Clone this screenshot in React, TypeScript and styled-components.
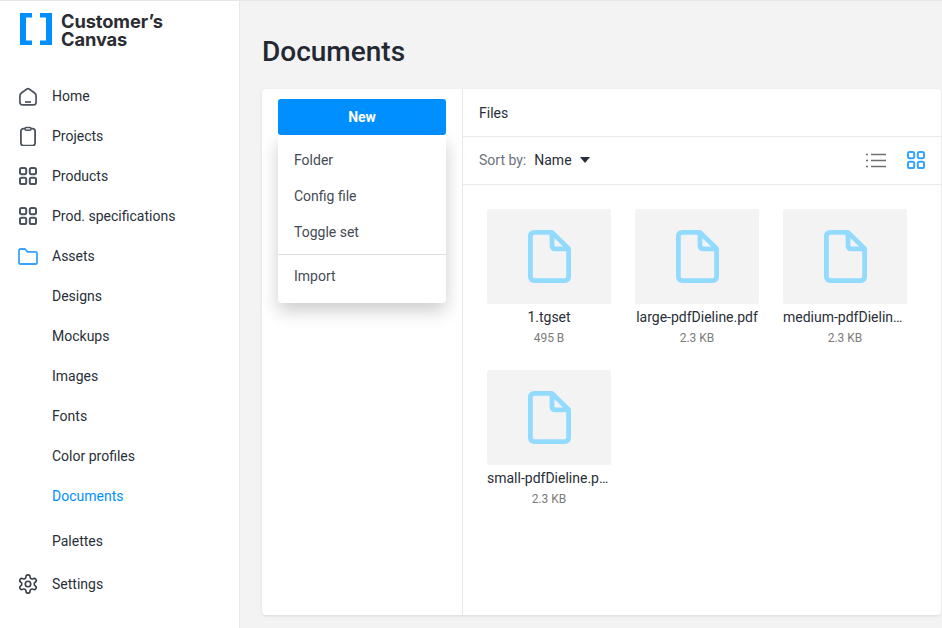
import React from 'react';
import styled, { createGlobalStyle } from 'styled-components';

const GlobalStyle = createGlobalStyle`
  html, body {
    margin: 0;
    padding: 0;
    height: 100%;
    overflow: hidden;
    font-family: Roboto, "Liberation Sans", sans-serif;
    color: #292f38;
  }
  * {
    box-sizing: border-box;
  }
`;

const HomeIcon = () => (
  <svg width="20" height="20" viewBox="0 0 20 20" fill="none" stroke="#4d535e" strokeWidth="1.7">
    <path d="M8.9 3 Q10 2.2 11.1 3 L16.6 7 Q18.1 8.1 18.1 10 V16.2 Q18.1 18.9 15.4 18.9 H4.6 Q1.9 18.9 1.9 16.2 V10 Q1.9 8.1 3.4 7 Z" strokeLinejoin="round" />
    <path d="M7 16 H13" />
  </svg>
);

const ClipboardIcon = () => (
  <svg width="20" height="20" viewBox="0 0 20 20" fill="none" stroke="#4d535e" strokeWidth="1.8">
    <rect x="2.9" y="2.6" width="14.2" height="17" rx="2.6" />
    <rect x="7" y="1.4" width="6" height="2.8" rx="1.3" fill="#fff" strokeWidth="1.5" />
  </svg>
);

const GridIcon = ({ color = '#4d535e' }: { color?: string }) => (
  <svg width="18" height="18" viewBox="0 0 18 18" fill="none" stroke={color} strokeWidth="2">
    <rect x="1" y="1" width="6.2" height="6.2" rx="1.6" />
    <rect x="10.8" y="1" width="6.2" height="6.2" rx="1.6" />
    <rect x="1" y="10.8" width="6.2" height="6.2" rx="1.6" />
    <rect x="10.8" y="10.8" width="6.2" height="6.2" rx="1.6" />
  </svg>
);

const FolderIcon = () => (
  <svg width="20" height="17" viewBox="0 0 20 17" fill="none" stroke="#37a3ff" strokeWidth="1.8" strokeLinejoin="round">
    <path d="M1 2.6 Q1 1 2.6 1 H7 L9.4 3.8 H17.4 Q19 3.8 19 5.4 V14.4 Q19 16 17.4 16 H2.6 Q1 16 1 14.4 Z" />
  </svg>
);

const GearIcon = () => (
  <svg width="20" height="20" viewBox="1 1 22 22" fill="none" stroke="#3a404a" strokeWidth="1.8" strokeLinecap="round" strokeLinejoin="round">
    <path d="M12.22 2h-.44a2 2 0 0 0-2 2v.18a2 2 0 0 1-1 1.73l-.43.25a2 2 0 0 1-2 0l-.15-.08a2 2 0 0 0-2.73.73l-.22.38a2 2 0 0 0 .73 2.73l.15.1a2 2 0 0 1 1 1.72v.51a2 2 0 0 1-1 1.74l-.15.09a2 2 0 0 0-.73 2.73l.22.38a2 2 0 0 0 2.73.73l.15-.08a2 2 0 0 1 2 0l.43.25a2 2 0 0 1 1 1.73V20a2 2 0 0 0 2 2h.44a2 2 0 0 0 2-2v-.18a2 2 0 0 1 1-1.73l.43-.25a2 2 0 0 1 2 0l.15.08a2 2 0 0 0 2.73-.73l.22-.39a2 2 0 0 0-.73-2.73l-.15-.08a2 2 0 0 1-1-1.74v-.5a2 2 0 0 1 1-1.74l.15-.09a2 2 0 0 0 .73-2.73l-.22-.38a2 2 0 0 0-2.73-.73l-.15.08a2 2 0 0 1-2 0l-.43-.25a2 2 0 0 1-1-1.73V4a2 2 0 0 0-2-2z" />
    <circle cx="12" cy="12" r="3" />
  </svg>
);

const ListIcon = () => (
  <svg width="20" height="15" viewBox="0 0 20 15" fill="none" stroke="#6f6f6f" strokeWidth="1.6">
    <path d="M0 1.5 H2 M5 1.5 H20 M0 7.5 H2 M5 7.5 H20 M0 13.5 H2 M5 13.5 H20" />
  </svg>
);

const FileIcon = () => (
  <svg width="43" height="53" viewBox="0 0 43 53" fill="none" stroke="#92dbff" strokeWidth="4.8" strokeLinejoin="round">
    <path d="M6.5 2.4 H24 L40.6 18.8 V46.6 Q40.6 50.6 36.6 50.6 H6.4 Q2.4 50.6 2.4 46.6 V6.5 Q2.4 2.4 6.5 2.4 Z" />
    <path d="M24 2.4 V15.4 Q24 18.8 27.4 18.8 H40.6" />
  </svg>
);

const Logo = () => (
  <LogoRow>
    <svg width="32" height="32" viewBox="0 0 32 32" fill="#008fff">
      <path d="M0 0 H12 V4.5 H6 V27.5 H12 V32 H0 Z" />
      <path d="M20 0 H32 V32 H20 V27.5 H26 V4.5 H20 Z" />
    </svg>
    <LogoText>
      <LogoLine>Customer’s</LogoLine>
      <LogoLine>Canvas</LogoLine>
    </LogoText>
  </LogoRow>
);

const navItems = [
  { label: 'Home', icon: <HomeIcon /> },
  { label: 'Projects', icon: <ClipboardIcon /> },
  { label: 'Products', icon: <GridIcon /> },
  { label: 'Prod. specifications', icon: <GridIcon /> },
  { label: 'Assets', icon: <FolderIcon /> },
  { label: 'Designs' },
  { label: 'Mockups' },
  { label: 'Images' },
  { label: 'Fonts' },
  { label: 'Color profiles' },
  { label: 'Documents', active: true },
  { label: 'Palettes', spaced: true },
];

const files = [
  { name: '1.tgset', size: '495 B' },
  { name: 'large-pdfDieline.pdf', size: '2.3 KB' },
  { name: 'medium-pdfDieline.pdf', size: '2.3 KB' },
  { name: 'small-pdfDieline.pdf', size: '2.3 KB' },
];

const App = () => {
  return (
    <Page>
      <GlobalStyle />
      <Sidebar>
        <Logo />
        <Nav>
          {navItems.map((item) => (
            <NavItem key={item.label} $active={item.active} $spaced={item.spaced}>
              <NavIcon>{item.icon}</NavIcon>
              {item.label}
            </NavItem>
          ))}
          <SettingsItem>
            <NavIcon>
              <GearIcon />
            </NavIcon>
            Settings
          </SettingsItem>
        </Nav>
      </Sidebar>
      <Main>
        <Title>Documents</Title>
        <Card>
          <LeftColumn>
            <NewButton>New</NewButton>
            <Menu>
              <MenuItem>Folder</MenuItem>
              <MenuItem>Config file</MenuItem>
              <MenuItem>Toggle set</MenuItem>
              <MenuDivider />
              <MenuItem>Import</MenuItem>
            </Menu>
          </LeftColumn>
          <RightColumn>
            <Breadcrumb>Files</Breadcrumb>
            <Toolbar>
              <SortLabel>Sort by:</SortLabel>
              <SortValue>Name</SortValue>
              <Caret />
              <ViewSwitch>
                <ListIcon />
                <GridIcon color="#37a3ff" />
              </ViewSwitch>
            </Toolbar>
            <FileGrid>
              {files.map((file) => (
                <FileTile key={file.name}>
                  <Thumb>
                    <FileIcon />
                  </Thumb>
                  <FileName>{file.name}</FileName>
                  <FileSize>{file.size}</FileSize>
                </FileTile>
              ))}
            </FileGrid>
          </RightColumn>
        </Card>
      </Main>
    </Page>
  );
};

const Page = styled.div`
  display: flex;
  width: 942px;
  height: 628px;
  background: #f3f3f3;
  border-top: 1px solid #e6e6e6;
  overflow: hidden;
`;

const Sidebar = styled.aside`
  width: 240px;
  flex-shrink: 0;
  background: #fff;
  border-right: 1px solid #e9e9e9;
  padding-top: 12px;
`;

const LogoRow = styled.div`
  display: flex;
  align-items: flex-start;
  gap: 9px;
  padding-left: 20px;
`;

const LogoText = styled.div`
  margin-top: -1px;
  font-family: Inter, "Liberation Sans", sans-serif;
  font-size: 18.3px;
  font-weight: 700;
  letter-spacing: -0.1px;
  color: #2b2d33;
`;

const LogoLine = styled.div`
  height: 18px;
  line-height: 18px;
  white-space: nowrap;
`;

const Nav = styled.nav`
  margin-top: 28px;
`;

const NavItem = styled.div<{ $active?: boolean; $spaced?: boolean }>`
  display: flex;
  align-items: center;
  height: 40px;
  padding-left: 18px;
  margin-top: ${(p) => (p.$spaced ? '5px' : '0')};
  font-size: 14px;
  color: ${(p) => (p.$active ? '#008fff' : '#292f38')};
`;

const SettingsItem = styled(NavItem)`
  margin-top: 3px;
`;

const NavIcon = styled.span`
  display: flex;
  align-items: center;
  justify-content: center;
  width: 20px;
  height: 20px;
  margin-right: 14px;
`;

const Main = styled.main`
  flex: 1;
  min-width: 0;
  padding: 0 1px 13px 22px;
  display: flex;
  flex-direction: column;
`;

const Title = styled.h1`
  margin: 0;
  height: 88px;
  padding-top: 34px;
  font-size: 28px;
  line-height: 34px;
  font-weight: 500;
  color: #232833;
`;

const Card = styled.section`
  flex: 1;
  display: flex;
  background: #fff;
  border-radius: 4px;
  box-shadow: 0 1px 3px rgba(0, 0, 0, 0.1);
`;

const LeftColumn = styled.div`
  position: relative;
  width: 201px;
  flex-shrink: 0;
  padding: 10px 16px 0;
  border-right: 1px solid #e9e9e9;
`;

const NewButton = styled.button`
  display: block;
  width: 100%;
  height: 36px;
  border: 0;
  border-radius: 3px;
  background: #008fff;
  color: #fff;
  font-family: inherit;
  font-size: 14px;
  font-weight: 700;
`;

const Menu = styled.div`
  position: absolute;
  top: 46px;
  left: 16px;
  right: 16px;
  height: 168px;
  padding-top: 7px;
  background: #fff;
  border-radius: 0 0 4px 4px;
  box-shadow: 0 8px 18px rgba(0, 0, 0, 0.2);
`;

const MenuItem = styled.div`
  height: 36px;
  padding-left: 16px;
  display: flex;
  align-items: center;
  font-size: 14px;
  color: #454b55;
`;

const MenuDivider = styled.div`
  height: 1px;
  margin: 4px 0 3px;
  background: #dcdcdc;
`;

const RightColumn = styled.div`
  flex: 1;
  min-width: 0;
  display: flex;
  flex-direction: column;
`;

const Breadcrumb = styled.div`
  height: 48px;
  padding-left: 16px;
  display: flex;
  align-items: center;
  font-size: 14px;
  color: #292f38;
  border-bottom: 1px solid #e9e9e9;
`;

const Toolbar = styled.div`
  height: 48px;
  padding: 0 16px 1px;
  display: flex;
  align-items: center;
  font-size: 14px;
  border-bottom: 1px solid #e9e9e9;
`;

const SortLabel = styled.span`
  color: #6d7279;
`;

const SortValue = styled.span`
  margin-left: 8px;
  color: #292f38;
`;

const Caret = styled.span`
  margin-left: 8px;
  width: 0;
  height: 0;
  border-left: 5px solid transparent;
  border-right: 5px solid transparent;
  border-top: 6px solid #292f38;
`;

const ViewSwitch = styled.div`
  margin-left: auto;
  display: flex;
  align-items: center;
  gap: 21px;
`;

const FileGrid = styled.div`
  display: grid;
  grid-template-columns: repeat(3, 124px);
  grid-auto-rows: 161px;
  column-gap: 24px;
  padding: 24px 24px 0;
`;

const FileTile = styled.div`
  width: 124px;
  text-align: center;
`;

const Thumb = styled.div`
  height: 95px;
  display: flex;
  align-items: center;
  justify-content: center;
  background: #f3f3f3;
  border-radius: 2px;
`;

const FileName = styled.div`
  margin-top: 4px;
  font-size: 14px;
  line-height: 18px;
  color: #292f38;
  white-space: nowrap;
  overflow: hidden;
  text-overflow: ellipsis;
`;

const FileSize = styled.div`
  margin-top: 4px;
  font-size: 12px;
  line-height: 16px;
  color: #7b7b7b;
`;

export default App;
